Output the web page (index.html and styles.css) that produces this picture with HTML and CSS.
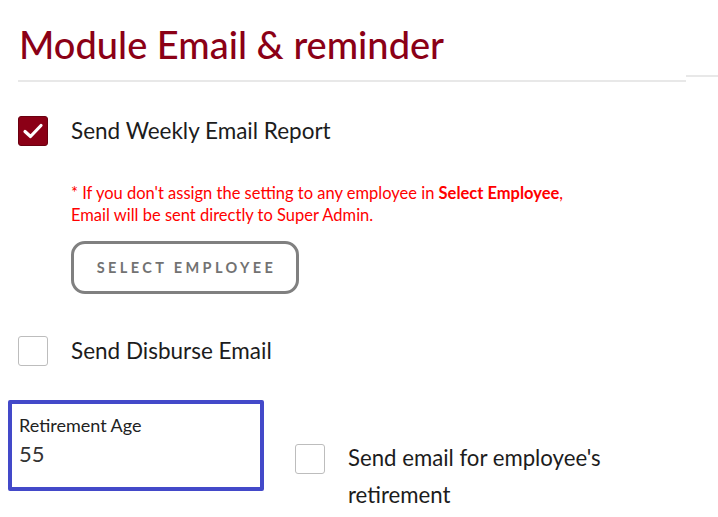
FILE: index.html
```html
<!DOCTYPE html>
<html>
<head>
<meta charset="utf-8">
<link rel="stylesheet" href="styles.css">
</head>
<body>
<div class="page">
  <div class="header">
    <h1 class="title">Module Email &amp; reminder</h1>
    <div class="rule-side"></div>
  </div>
  <div class="section">
    <label class="check-row">
      <span class="box checked">
        <svg width="22" height="18" viewBox="0 0 22 18"><path d="M3 9.5 L8.5 14.5 L19 3.5" fill="none" stroke="#fff" stroke-width="3.2" stroke-linecap="round" stroke-linejoin="round"/></svg>
      </span>
      <span class="check-label">Send Weekly Email Report</span>
    </label>
    <div class="sub">
      <p class="note">* If you don't assign the setting to any employee in <b>Select Employee</b>,<br>Email will be sent directly to Super Admin.</p>
      <button class="btn-outline">SELECT EMPLOYEE</button>
    </div>
    <label class="check-row disburse">
      <span class="box"></span>
      <span class="check-label">Send Disburse Email</span>
    </label>
    <div class="retire-row">
      <div class="field">
        <div class="field-label">Retirement Age</div>
        <div class="field-value">55</div>
      </div>
      <label class="check-row retire-check">
        <span class="box"></span>
        <span class="check-label wrap">Send email for employee's retirement</span>
      </label>
    </div>
  </div>
</div>
</body>
</html>
```
FILE: styles.css
```css
html, body {
  margin: 0;
  padding: 0;
  background: #fff;
  font-family: Lato, "Open Sans", sans-serif;
  color: #1c1c1c;
}
.page {
  width: 718px;
  height: 517px;
  overflow: hidden;
}
.header {
  display: flex;
  align-items: flex-end;
  padding-top: 21px;
}
.title {
  margin: 0 0 0 18px;
  width: 668px;
  font-size: 38px;
  font-weight: 500;
  line-height: 46px;
  color: #8b0016;
  padding-left: 1px;
  padding-bottom: 13px;
  border-bottom: 2px solid #e8e8e8;
  box-sizing: border-box;
}
.rule-side {
  flex: 1;
  height: 2px;
  background: #e8e8e8;
  margin-bottom: 5px;
}
.section {
  padding-left: 18px;
}
.check-row {
  display: flex;
  align-items: center;
  gap: 23px;
}
.check-row:first-child {
  margin-top: 34px;
}
.box {
  width: 30px;
  height: 30px;
  box-sizing: border-box;
  border: 1px solid #bdbdbd;
  border-radius: 3px;
  flex: none;
  display: flex;
  align-items: center;
  justify-content: center;
  background: #fff;
}
.box.checked {
  background: #8b0016;
  border: 1px solid #6a0010;
}
.check-label {
  font-size: 22.5px;
  line-height: 30px;
}
.sub {
  padding-left: 53px;
  margin-top: 36px;
}
.note {
  margin: 0;
  color: #ff0000;
  font-size: 16.5px;
  line-height: 22px;
}
.note b {
  font-weight: 700;
}
.btn-outline {
  margin-top: 15px;
  width: 228px;
  height: 53px;
  border: 3px solid #808080;
  border-radius: 14px;
  background: #fff;
  font-family: Lato, sans-serif;
  font-weight: 700;
  font-size: 14.5px;
  letter-spacing: 3.4px;
  color: #727272;
  padding: 0 0 0 3px;
}
.disburse {
  margin-top: 42px;
}
.retire-row {
  display: flex;
  align-items: flex-start;
  margin-top: 34px;
  margin-left: -10px;
}
.field {
  width: 256px;
  height: 91px;
  box-sizing: border-box;
  border: 4px solid #4349c9;
  border-radius: 2px;
  padding: 9px 0 0 7px;
}
.field-label {
  font-size: 18px;
  line-height: 24px;
  color: #222;
}
.field-value {
  font-size: 22px;
  line-height: 34px;
  color: #333;
}
.retire-check {
  margin-left: 31px;
  margin-top: 34px;
  align-items: flex-start;
}
.retire-check .box {
  margin-top: 10px;
}
.check-label.wrap {
  width: 295px;
  font-size: 22.2px;
  line-height: 37px;
  margin-top: 5px;
}
```
